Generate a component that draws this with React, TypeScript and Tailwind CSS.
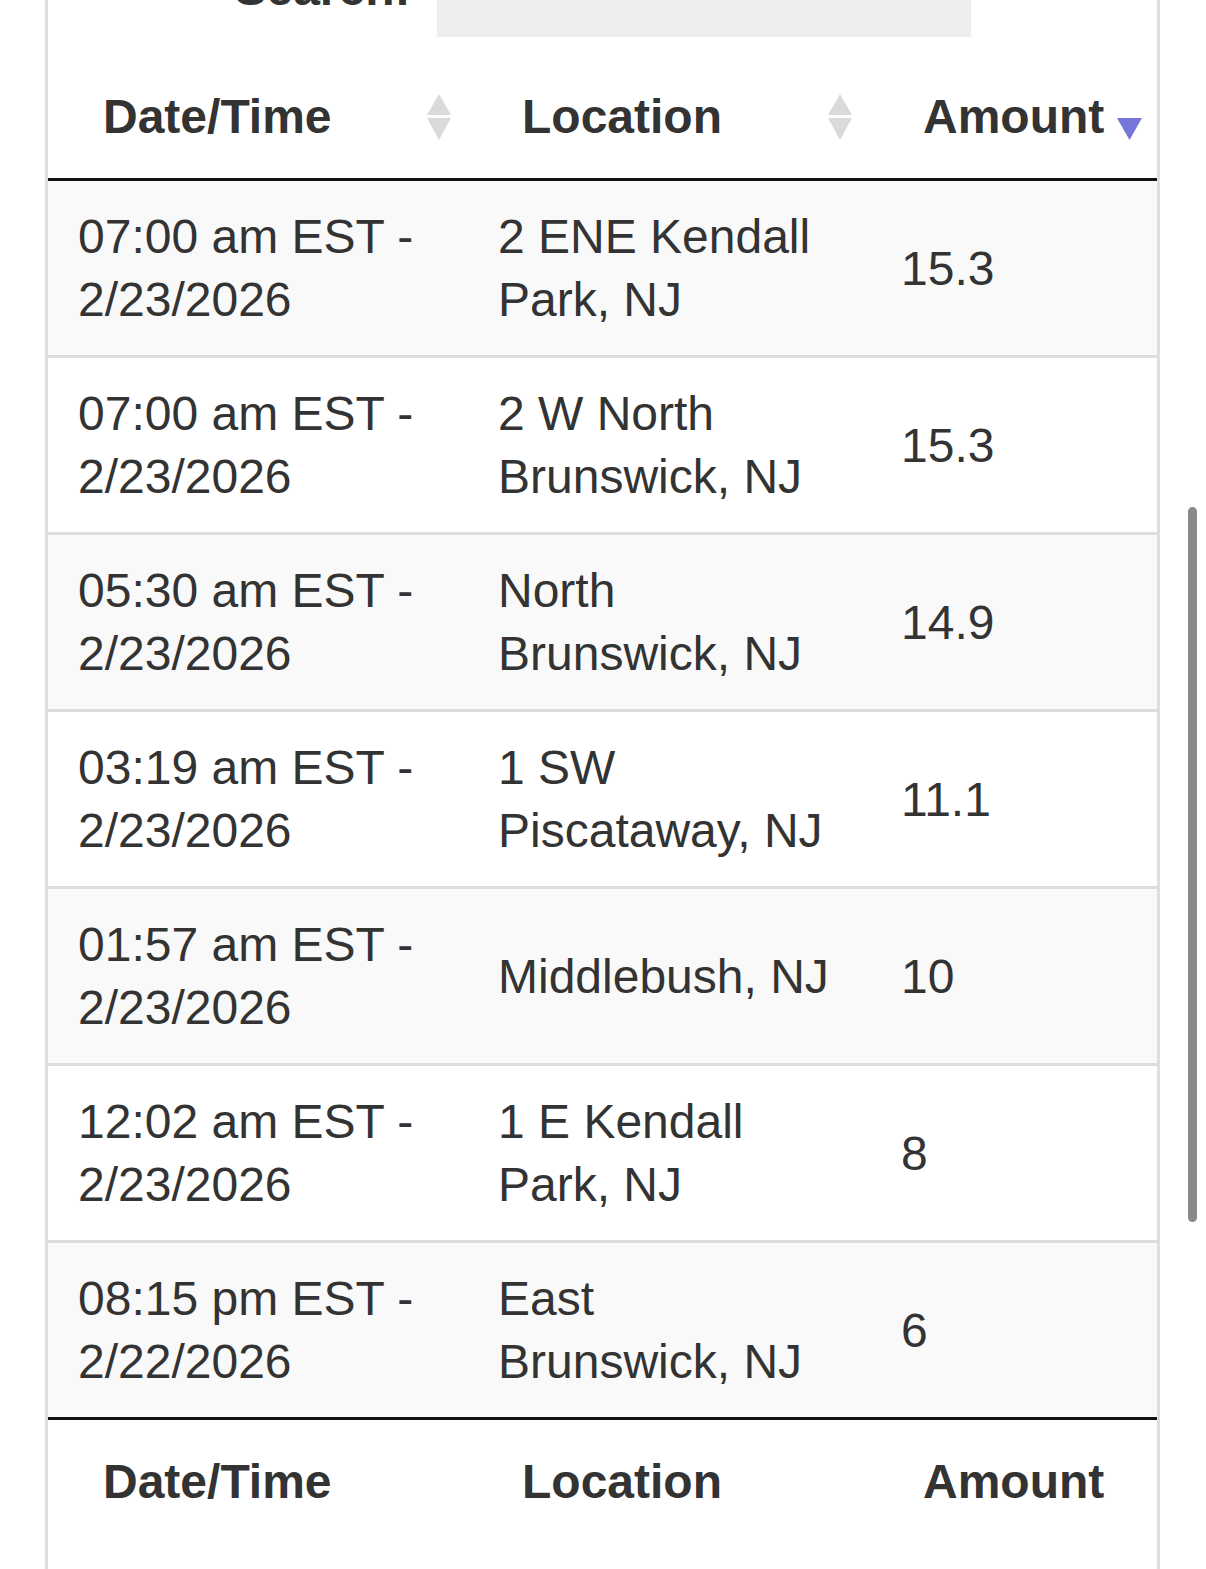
import React from "react";

// 표 데이터
const rows = [
  { time: "07:00 am EST - 2/23/2026", place: "2 ENE Kendall Park, NJ", amount: "15.3" },
  { time: "07:00 am EST - 2/23/2026", place: "2 W North Brunswick, NJ", amount: "15.3" },
  { time: "05:30 am EST - 2/23/2026", place: "North Brunswick, NJ", amount: "14.9" },
  { time: "03:19 am EST - 2/23/2026", place: "1 SW Piscataway, NJ", amount: "11.1" },
  { time: "01:57 am EST - 2/23/2026", place: "Middlebush, NJ", amount: "10" },
  { time: "12:02 am EST - 2/23/2026", place: "1 E Kendall Park, NJ", amount: "8" },
  { time: "08:15 pm EST - 2/22/2026", place: "East Brunswick, NJ", amount: "6" },
];

function SortBoth() {
  return (
    <svg width="24" height="46" viewBox="0 0 24 46" className="shrink-0">
      <polygon points="12,0 24,21 0,21" fill="#dadada" />
      <polygon points="0,24 24,24 12,46" fill="#dadada" />
    </svg>
  );
}

function SortDesc() {
  return (
    <svg width="25" height="46" viewBox="0 0 25 46" className="shrink-0">
      <polygon points="0,24 25,24 12.5,46" fill="#7676d8" />
    </svg>
  );
}

function HeadCell({ label, icon, px }: { label: string; icon?: React.ReactNode; px: string }) {
  return (
    <th className={`py-[30px] ${px} text-left font-bold`}>
      <div className="flex items-center justify-between">
        <span>{label}</span>
        {icon}
      </div>
    </th>
  );
}

export default function App() {
  return (
    <div className="relative h-[1569px] w-[1206px] overflow-hidden bg-white font-['Liberation_Sans',Arial,sans-serif] text-[48px] leading-[63px] text-[#333]">
      <div className="ml-[45px] flex h-full w-[1115px] flex-col border-x-[3px] border-[#dedede]">
        {/* 검색 영역 (위쪽이 잘린 상태) */}
        <div className="flex h-[37px] items-end justify-center gap-[26px] overflow-hidden">
          <span className="mb-[17px] font-bold">Search:</span>
          <div className="h-[90px] w-[534px] bg-[#ededf0]" />
        </div>

        <table className="mt-[18px] w-full table-fixed border-collapse">
          <colgroup>
            <col className="w-[420px]" />
            <col className="w-[403px]" />
            <col />
          </colgroup>
          <thead>
            <tr className="border-b-[3px] border-[#111]">
              <HeadCell label="Date/Time" icon={<SortBoth />} px="pl-[55px] pr-[17px]" />
              <HeadCell label="Location" icon={<SortBoth />} px="pl-[54px] pr-[19px]" />
              <HeadCell label="Amount" icon={<SortDesc />} px="pl-[52px] pr-[15px]" />
            </tr>
          </thead>
          <tbody>
            {rows.map((r, i) => (
              <tr
                key={i}
                className={`${i % 2 === 0 ? "bg-[#f9f9f9]" : "bg-white"} ${i > 0 ? "border-t-[3px] border-[#dddddd]" : ""}`}
              >
                <td className="px-[30px] py-[24px] align-middle">{r.time}</td>
                <td className="pl-[30px] pr-[40px] py-[24px] align-middle">{r.place}</td>
                <td className="px-[30px] py-[24px] align-middle">{r.amount}</td>
              </tr>
            ))}
          </tbody>
          <tfoot>
            <tr className="border-t-[3px] border-[#111]">
              <th className="py-[30px] pl-[55px] text-left font-bold">Date/Time</th>
              <th className="py-[30px] pl-[54px] text-left font-bold">Location</th>
              <th className="py-[30px] pl-[52px] text-left font-bold">Amount</th>
            </tr>
          </tfoot>
        </table>
      </div>

      {/* 오버레이 스크롤바 */}
      <div className="absolute left-[1188px] top-[507px] h-[715px] w-[9px] rounded-full bg-[#8a8a8a]" />
    </div>
  );
}
